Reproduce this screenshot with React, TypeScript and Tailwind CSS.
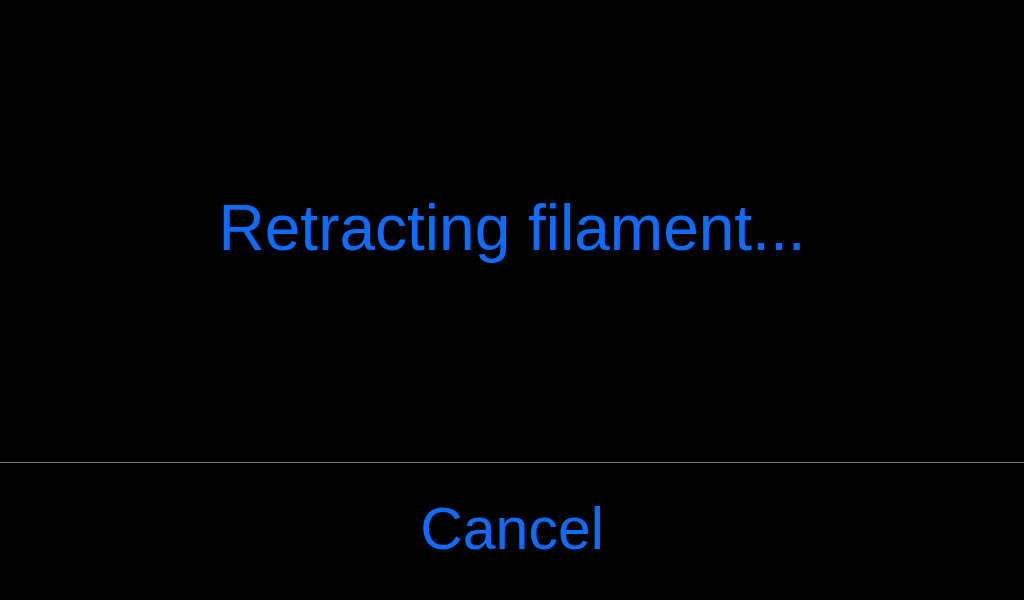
const App = () => {
  return (
    <div className="w-[1024px] h-[600px] bg-black flex flex-col font-['Liberation_Sans',Arial,sans-serif] text-[#0f6cff]">
      {/* Status message */}
      <div className="flex-1 flex items-center justify-center pb-[6px]">
        <span className="text-[64px] leading-none">Retracting filament...</span>
      </div>

      {/* Cancel action */}
      <button className="h-[138px] border-t border-[#7a7a7a] flex items-center justify-center pb-[5px]">
        <span className="text-[59px] leading-none">Cancel</span>
      </button>
    </div>
  );
};

export default App;
